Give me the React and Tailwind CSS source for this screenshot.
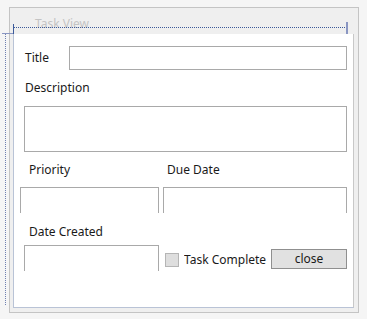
export default function App() {
  const font = { fontFamily: '"Noto Sans", "Open Sans", sans-serif' }
  return (
    <div className="relative h-[319px] w-[367px] overflow-hidden bg-[#f5f5f5] pl-[9px] pt-[7px]" style={font}>
      {/* designer selection adornments */}
      <div className="absolute left-[13px] top-[27px] h-0 w-[334px] border-t border-dotted border-[#3c5a9a]" />
      <div className="absolute left-[13px] top-[24px] h-[10px] w-px bg-[#3c5a9a]" />
      <div className="absolute left-[346px] top-[22px] h-[12px] w-[2px] bg-[#8a96c2]" />
      <div className="absolute left-[5px] top-[33px] h-[272px] w-0 border-l border-dotted border-[#6f80b0]" />
      <div className="absolute left-[2px] top-[33px] h-px w-[11px] bg-[#8a96c2]" />

      {/* window */}
      <div className="flex h-[306px] w-[350px] flex-col border border-[#c4c4c4] bg-[#efefef]">
        <div className="h-[26px] pl-[25px] pt-[8px] text-[12px] leading-[16px] text-[#c4c4c4]">Task View</div>
        <div className="ml-[3px] mr-[4px] flex h-[274px] flex-col border-b border-l border-r border-b-[#b9c3d6] border-l-[#b9c3d6] border-r-[#c8c8c8] bg-white text-[12px] text-[#1a1a1a]">
          {/* title row */}
          <div className="mt-[12px] flex items-center">
            <span className="ml-[11px] w-[44px] leading-[16px]">Title</span>
            <div className="h-[24px] w-[278px] border border-[#a9a9a9] bg-white" />
          </div>
          <div className="ml-[11px] mt-[10px] leading-[16px]">Description</div>
          <div className="ml-[10px] mt-[10px] h-[46px] w-[323px] border border-[#a9a9a9] bg-white" />

          <div className="mt-[10px] flex leading-[16px]">
            <span className="ml-[15px] w-[138px]">Priority</span>
            <span>Due Date</span>
          </div>
          <div className="mt-[9px] flex">
            <div className="ml-[6px] h-[26px] w-[139px] border-l border-r border-t border-[#a9a9a9]" />
            <div className="ml-[4px] h-[26px] w-[184px] border-l border-r border-t border-[#a9a9a9]" />
          </div>

          <div className="ml-[15px] mt-[11px] leading-[16px]">Date Created</div>
          <div className="mt-[5px] flex items-start">
            <div className="ml-[10px] h-[26px] w-[135px] border-l border-r border-t border-[#a9a9a9]" />
            <div className="ml-[6px] mt-[7px] flex items-center">
              <div className="h-[14px] w-[14px] border border-[#b5b5b5] bg-[#dedede]" />
              <span className="ml-[5px] w-[84px] overflow-hidden whitespace-nowrap leading-[16px]">Task Complete</span>
            </div>
            <div className="ml-[3px] mt-[4px] flex h-[20px] w-[76px] items-center justify-center border border-[#8f8f8f] bg-[#e1e1e1] leading-[16px]">
              close
            </div>
          </div>
        </div>
      </div>
    </div>
  )
}
